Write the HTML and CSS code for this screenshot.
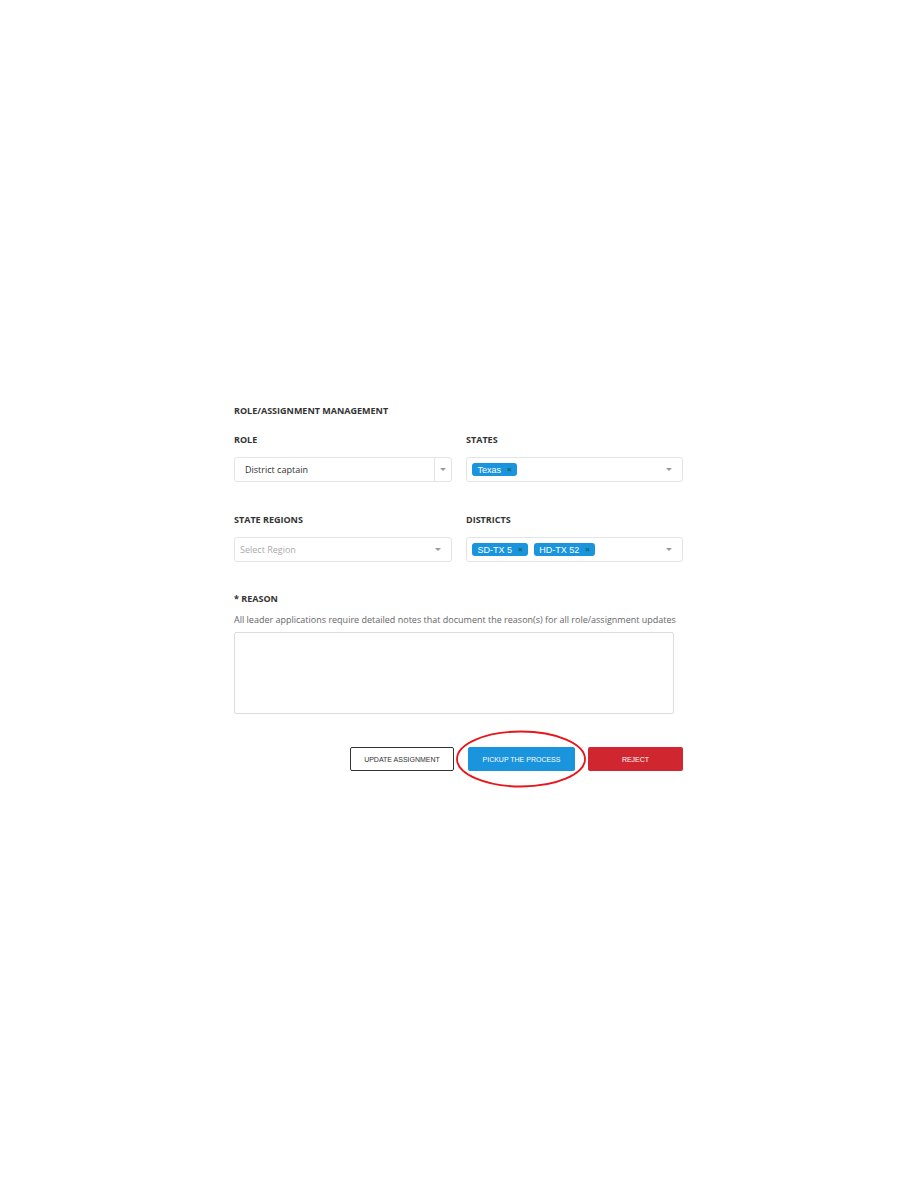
FILE: index.html
```html
<!DOCTYPE html>
<html lang="en">
<head>
    <meta charset="UTF-8">
    <meta name="viewport" content="width=device-width, initial-scale=1.0">
    <title>Role/Assignment Management</title>
    <link rel="stylesheet" href="styles.css">
</head>
<body>

<div class="card">
    <h2 class="section-title">ROLE/ASSIGNMENT MANAGEMENT</h2>

    <div class="field-grid">
        <div class="field">
            <label class="field-label">ROLE</label>
            <div class="select select-split">
                <span class="select-value">District captain</span>
                <span class="select-toggle"><span class="caret"></span></span>
            </div>
        </div>
        <div class="field">
            <label class="field-label">STATES</label>
            <div class="select">
                <div class="tags">
                    <span class="tag">Texas <span class="tag-x">&times;</span></span>
                </div>
                <span class="caret"></span>
            </div>
        </div>

        <div class="field">
            <label class="field-label">STATE REGIONS</label>
            <div class="select">
                <span class="select-placeholder">Select Region</span>
                <span class="caret"></span>
            </div>
        </div>
        <div class="field">
            <label class="field-label">DISTRICTS</label>
            <div class="select">
                <div class="tags">
                    <span class="tag">SD-TX 5 <span class="tag-x">&times;</span></span>
                    <span class="tag">HD-TX 52 <span class="tag-x">&times;</span></span>
                </div>
                <span class="caret"></span>
            </div>
        </div>
    </div>

    <div class="reason">
        <label class="field-label">* REASON</label>
        <p class="help-text">All leader applications require detailed notes that document the reason(s) for all role/assignment updates</p>
        <textarea class="reason-box"></textarea>
    </div>

    <div class="actions">
        <button class="btn btn-outline">UPDATE ASSIGNMENT</button>
        <span class="highlight">
            <button class="btn btn-primary">PICKUP THE PROCESS</button>
            <svg class="ring" width="132" height="60" viewBox="0 0 132 60">
                <ellipse cx="66" cy="30" rx="64" ry="27.5" fill="none" stroke="#e8151b" stroke-width="1.8"/>
            </svg>
        </span>
        <button class="btn btn-danger">REJECT</button>
    </div>
</div>

</body>
</html>
```

FILE: styles.css
```css
body {
    margin: 0;
    background-color: #fff;
    font-family: "Open Sans", Arial, sans-serif;
    color: #333;
}
.card {
    width: 449px;
    margin: 388px auto 0;
    padding: 17px 20px 19px 19px;
    box-shadow: 0 0 1px rgba(0, 0, 0, 0.03);
}
.section-title {
    margin: 0;
    font-size: 9px;
    line-height: 12px;
    font-weight: 700;
    color: #333;
}
.field-grid {
    display: grid;
    grid-template-columns: 218px 217px;
    column-gap: 14px;
    row-gap: 32px;
    margin-top: 17px;
}
.field {
    display: flex;
    flex-direction: column;
}
.field-label {
    display: block;
    font-size: 9px;
    line-height: 12px;
    font-weight: 700;
    color: #333;
    margin-bottom: 11px;
}
.select {
    box-sizing: border-box;
    height: 25px;
    border: 1px solid #e4e4e4;
    border-radius: 3px;
    display: flex;
    align-items: center;
    justify-content: space-between;
    padding: 0 10px 0 5px;
    font-size: 9px;
}
.select-split {
    padding: 0 0 0 10px;
}
.select-value {
    color: #333;
}
.select-placeholder {
    color: #aaa;
    font-size: 9px;
}
.select-toggle {
    align-self: stretch;
    width: 16px;
    border-left: 1px solid #e4e4e4;
    display: flex;
    align-items: center;
    justify-content: center;
}
.caret {
    width: 0;
    height: 0;
    border-left: 3.5px solid transparent;
    border-right: 3.5px solid transparent;
    border-top: 3.5px solid #999;
}
.tags {
    display: flex;
    gap: 6px;
}
.tag {
    display: inline-flex;
    align-items: center;
    height: 13px;
    padding: 0 5px 0 5.5px;
    border-radius: 3px;
    background-color: #1a94dc;
    color: #fff;
    font-family: "Liberation Sans", Arial, sans-serif;
    font-size: 9px;
}
.tag-x {
    margin-left: 6px;
    font-size: 8px;
    font-weight: 700;
    color: #1f5d5a;
}
.reason {
    margin-top: 31px;
}
.reason .field-label {
    margin-bottom: 9px;
}
.help-text {
    margin: 0;
    font-size: 9px;
    line-height: 12px;
    color: #666;
    white-space: nowrap;
}
.reason-box {
    display: block;
    box-sizing: border-box;
    width: 440px;
    height: 82px;
    margin-top: 6px;
    border: 1px solid #dcdcdc;
    border-radius: 2px;
    resize: none;
}
.actions {
    display: flex;
    justify-content: flex-end;
    align-items: center;
    margin-top: 33px;
}
.btn {
    box-sizing: border-box;
    height: 24px;
    border-radius: 2px;
    font-family: "Liberation Sans", Arial, sans-serif;
    font-size: 7px;
    cursor: pointer;
}
.btn-outline {
    width: 104px;
    background-color: #fff;
    border: 1px solid #333;
    color: #333;
}
.highlight {
    position: relative;
    display: inline-block;
    margin-left: 14px;
}
.btn-primary {
    display: block;
    width: 107px;
    background-color: #1a94dc;
    border: none;
    color: #fff;
}
.ring {
    position: absolute;
    left: -13px;
    top: -18px;
    pointer-events: none;
}
.btn-danger {
    width: 95px;
    margin-left: 13px;
    background-color: #d0262f;
    border: none;
    color: #fff;
}
```
